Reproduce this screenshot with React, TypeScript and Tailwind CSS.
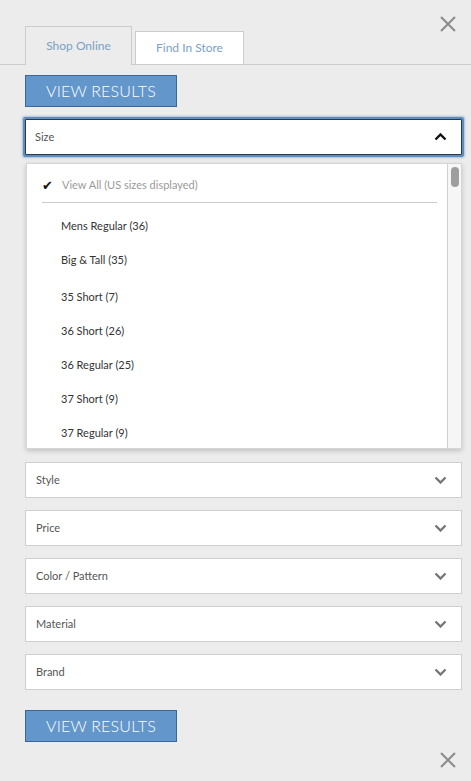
import React from "react";

const CloseX = () => (
  <svg width="16" height="16" viewBox="0 0 16 16" className="block">
    <path d="M1 1 L15 15 M15 1 L1 15" stroke="#8a8a8a" strokeWidth="2" fill="none" />
  </svg>
);

const ChevronDown = ({ color = "#777", up = false }: { color?: string; up?: boolean }) => (
  <svg width="13" height="8" viewBox="0 0 13 8" className="block">
    <path
      d={up ? "M1.5 6.5 L6.5 1.5 L11.5 6.5" : "M1.5 1.5 L6.5 6.5 L11.5 1.5"}
      stroke={color}
      strokeWidth="2.4"
      fill="none"
    />
  </svg>
);

const ViewResults = () => (
  <button className="w-[152px] h-[32px] bg-[#6396ca] border border-[#3a679a] text-white text-[16px] font-light tracking-[0.2px] flex items-center justify-center">
    VIEW RESULTS
  </button>
);

const Filter = ({ label }: { label: string }) => (
  <div className="h-[36px] bg-white border border-[#cfcfcf] flex items-center justify-between pl-[10px] pr-[14px]">
    <span className="text-[11px] text-[#555]">{label}</span>
    <ChevronDown />
  </div>
);

const sizes: { label: string; extra?: boolean }[] = [
  { label: "Mens Regular (36)" },
  { label: "Big & Tall (35)" },
  { label: "35 Short (7)", extra: true },
  { label: "36 Short (26)" },
  { label: "36 Regular (25)" },
  { label: "37 Short (9)" },
  { label: "37 Regular (9)" },
];

export default function App() {
  return (
    <div
      className="w-[471px] h-[781px] bg-[#ebeceb] overflow-hidden flex flex-col"
      style={{ fontFamily: "Lato, 'Open Sans', sans-serif" }}
    >
      <div className="h-[26px] shrink-0 relative">
        <div className="absolute left-[440px] top-[16px]">
          <CloseX />
        </div>
      </div>
      <div className="flex shrink-0 items-end gap-[3px] pl-[25px] border-b border-[#cccccc] h-[39px]">
        <div className="w-[107px] h-[39px] -mb-px border border-b-0 border-[#cccccc] bg-[#ebeceb] flex items-center justify-center text-[12px] text-[#7d9fc8]">
          Shop Online
        </div>
        <div className="w-[109px] h-[33px] border border-b-0 border-[#cccccc] bg-white flex items-center justify-center text-[12px] text-[#7d9fc8]">
          Find In Store
        </div>
      </div>
      <div className="pl-[25px] pr-[9px] flex flex-col">
        <div className="mt-[10px]">
          <ViewResults />
        </div>
        <div className="mt-[12px] h-[36px] bg-white border border-[#2c3a48] rounded-[1px] shadow-[0_0_0_2px_#5f8cbe,0_0_2px_3px_rgba(95,140,190,0.45)] flex items-center justify-between pl-[9px] pr-[14px]">
          <span className="text-[11px] text-[#555]">Size</span>
          <ChevronDown color="#111" up />
        </div>
        <div className="mt-[8px] ml-px h-[286px] shrink-0 bg-white border border-[#d6d6d6] shadow-[0_2px_5px_rgba(0,0,0,0.18)] flex overflow-hidden">
          <div className="flex-1 flex flex-col">
            <div className="h-[38px] shrink-0 pt-[4px] flex items-center pl-[15px]">
              <span className="w-[20px] text-[13px] text-[#111] leading-none">✔</span>
              <span className="text-[11px] text-[#9a9a9a]">View All (US sizes displayed)</span>
            </div>
            <div className="h-px shrink-0 bg-[#cccccc] ml-[15px] mr-[10px]" />
            <div className="pt-[6px] shrink-0 flex flex-col">
              {sizes.map((s) => (
                <div
                  key={s.label}
                  className={`h-[34px] shrink-0 flex items-center pl-[34px] text-[11px] text-[#333] ${s.extra ? "mt-[3px]" : ""}`}
                >
                  {s.label}
                </div>
              ))}
            </div>
          </div>
          <div className="w-[14px] border-l border-[#d0d0d0] bg-[#f6f6f6] pt-[3px] flex justify-center">
            <div className="w-[8px] h-[20px] rounded-full bg-[#9e9e9e]" />
          </div>
        </div>
        <div className="mt-[13px] flex flex-col gap-[12px]">
          <Filter label="Style" />
          <Filter label="Price" />
          <Filter label="Color / Pattern" />
          <Filter label="Material" />
          <Filter label="Brand" />
        </div>
        <div className="mt-[20px]">
          <ViewResults />
        </div>
        <div className="mt-[10px] pl-[415px]">
          <CloseX />
        </div>
      </div>
    </div>
  );
}
